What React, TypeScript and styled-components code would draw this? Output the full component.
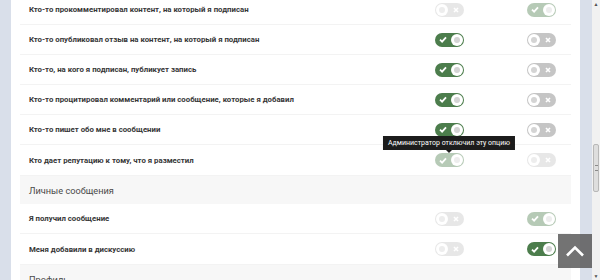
import styled, { createGlobalStyle } from "styled-components";

const GlobalStyle = createGlobalStyle`
  html, body {
    margin: 0;
    padding: 0;
    height: 280px;
    overflow: hidden;
    background: #fff;
    font-family: Roboto, "Liberation Sans", sans-serif;
  }
`;

type ToggleState = { on: boolean; disabled?: boolean; tooltip?: string };

type Row = { label: string; a: ToggleState; b: ToggleState };

type Section = { title?: string; rows: Row[] };

const sections: Section[] = [
  {
    rows: [
      {
        label: "Кто-то прокомментировал контент, на который я подписан",
        a: { on: false, disabled: true },
        b: { on: true, disabled: true },
      },
      {
        label: "Кто-то опубликовал отзыв на контент, на который я подписан",
        a: { on: true },
        b: { on: false },
      },
      {
        label: "Кто-то, на кого я подписан, публикует запись",
        a: { on: true },
        b: { on: false },
      },
      {
        label: "Кто-то процитировал комментарий или сообщение, которые я добавил",
        a: { on: true },
        b: { on: false },
      },
      {
        label: "Кто-то пишет обо мне в сообщении",
        a: { on: true },
        b: { on: false },
      },
      {
        label: "Кто дает репутацию к тому, что я разместил",
        a: { on: true, disabled: true, tooltip: "Администратор отключил эту опцию" },
        b: { on: false, disabled: true },
      },
    ],
  },
  {
    title: "Личные сообщения",
    rows: [
      {
        label: "Я получил сообщение",
        a: { on: false, disabled: true },
        b: { on: true, disabled: true },
      },
      {
        label: "Меня добавили в дискуссию",
        a: { on: false, disabled: true },
        b: { on: true },
      },
    ],
  },
  { title: "Профиль", rows: [] },
];

const Toggle = ({ on, disabled, tooltip }: ToggleState) => (
  <ToggleWrap>
    <Track $on={on} $disabled={disabled}>
      {on ? (
        <>
          <Mark>
            <svg width="8" height="7" viewBox="0 0 8 7">
              <path d="M1 3.6 L3.1 5.6 L7 1.3" fill="none" stroke="#fff" strokeWidth="1.8" />
            </svg>
          </Mark>
          <Knob />
        </>
      ) : (
        <>
          <Knob />
          <Mark>
            <svg width="6" height="6" viewBox="0 0 6 6">
              <path d="M1 1 L5 5 M5 1 L1 5" stroke="#fff" strokeWidth="1.6" />
            </svg>
          </Mark>
        </>
      )}
    </Track>
    {tooltip && <Tooltip>{tooltip}</Tooltip>}
  </ToggleWrap>
);

export default function App() {
  return (
    <>
      <GlobalStyle />
      <Page>
        <SideStrip />
        <Panel>
          <Content>
            {sections.map((s, i) => (
              <div key={i}>
                {s.title && <SectionHeader>{s.title}</SectionHeader>}
                {s.rows.map((r) => (
                  <RowLine key={r.label}>
                    <Label>{r.label}</Label>
                    <Toggle {...r.a} />
                    <Toggle {...r.b} />
                  </RowLine>
                ))}
              </div>
            ))}
          </Content>
        </Panel>
        <RightStrip />
        <Scrollbar>
          <Arrow>▲</Arrow>
          <Thumb>
            <Grip />
          </Thumb>
          <Arrow>▼</Arrow>
        </Scrollbar>
      </Page>
      <BackToTop>
        <svg width="20" height="12" viewBox="0 0 20 12">
          <path d="M2 10.5 L10 2.5 L18 10.5" fill="none" stroke="#fff" strokeWidth="2.6" />
        </svg>
      </BackToTop>
    </>
  );
}

const Page = styled.div`
  display: flex;
  width: 600px;
  height: 280px;
  overflow: hidden;
`;

const SideStrip = styled.div`
  width: 11px;
  flex: none;
  background: #d9dfea;
`;

const RightStrip = styled(SideStrip)`
  width: 12px;
`;

const Panel = styled.div`
  flex: 1;
  background: #fff;
  padding: 0 9px;
  overflow: hidden;
`;

const Content = styled.div`
  margin-top: -5px;
`;

const SectionHeader = styled.div`
  height: 28px;
  display: flex;
  align-items: center;
  padding-left: 9px;
  background: #f7f7f7;
  color: #4a4a4a;
  font-size: 9.2px;
`;

const RowLine = styled.div`
  display: grid;
  grid-template-columns: 1fr 124px 60px;
  align-items: center;
  justify-items: center;
  box-sizing: border-box;
  height: 30px;
  border-bottom: 1px solid #f3f3f3;
  &:last-child {
    height: 31px;
  }
`;

const Label = styled.div`
  justify-self: start;
  padding-left: 9px;
  font-size: 7.8px;
  font-weight: 700;
  color: #363636;
  white-space: nowrap;
`;

const ToggleWrap = styled.div`
  position: relative;
  display: flex;
`;

const Track = styled.div<{ $on: boolean; $disabled?: boolean }>`
  width: 29px;
  height: 14px;
  box-sizing: border-box;
  border-radius: 7px;
  display: flex;
  align-items: center;
  justify-content: space-between;
  background: ${(p) => (p.$on ? "#4c7d4c" : "#c5c5c5")};
  opacity: ${(p) => (p.$disabled ? 0.4 : 1)};
  padding: ${(p) => (p.$on ? "0 1px 0 4px" : "0 5px 0 1px")};
`;

const Mark = styled.span`
  display: flex;
`;

const Knob = styled.span`
  width: 12px;
  height: 12px;
  box-sizing: border-box;
  border-radius: 50%;
  background: #fff;
  display: flex;
  align-items: center;
  justify-content: center;

  &::after {
    content: "";
    width: 6px;
    height: 6px;
    border-radius: 50%;
    background: #d4d4d4;
  }
`;

const Tooltip = styled.div`
  position: absolute;
  bottom: calc(100% + 3px);
  left: 50%;
  transform: translateX(-50%);
  background: #1c1c1c;
  color: #fff;
  font-size: 7px;
  white-space: nowrap;
  padding: 2px 5px;
  line-height: 10px;

  &::after {
    content: "";
    position: absolute;
    top: 100%;
    left: 50%;
    margin-left: -3px;
    border: 3px solid transparent;
    border-top-color: #1c1c1c;
  }
`;

const Scrollbar = styled.div`
  width: 8px;
  flex: none;
  background: #f1f1f1;
  display: flex;
  flex-direction: column;
  align-items: center;
  justify-content: space-between;
  position: relative;
`;

const Arrow = styled.span`
  font-size: 5px;
  line-height: 8px;
  color: #505050;
`;

const Thumb = styled.div`
  position: absolute;
  top: 144px;
  left: 1px;
  width: 6px;
  height: 48px;
  box-sizing: border-box;
  background: #dedede;
  border: 1px solid #b8b8b8;
  border-radius: 2px;
  display: flex;
  align-items: center;
  justify-content: center;
`;

const Grip = styled.span`
  width: 3px;
  height: 4px;
  border-top: 1px solid #8a8a8a;
  border-bottom: 1px solid #8a8a8a;
`;

const BackToTop = styled.div`
  position: fixed;
  right: 8px;
  bottom: 12px;
  width: 34px;
  height: 34px;
  background: rgba(90, 90, 90, 0.85);
  display: flex;
  align-items: center;
  justify-content: center;
`;
